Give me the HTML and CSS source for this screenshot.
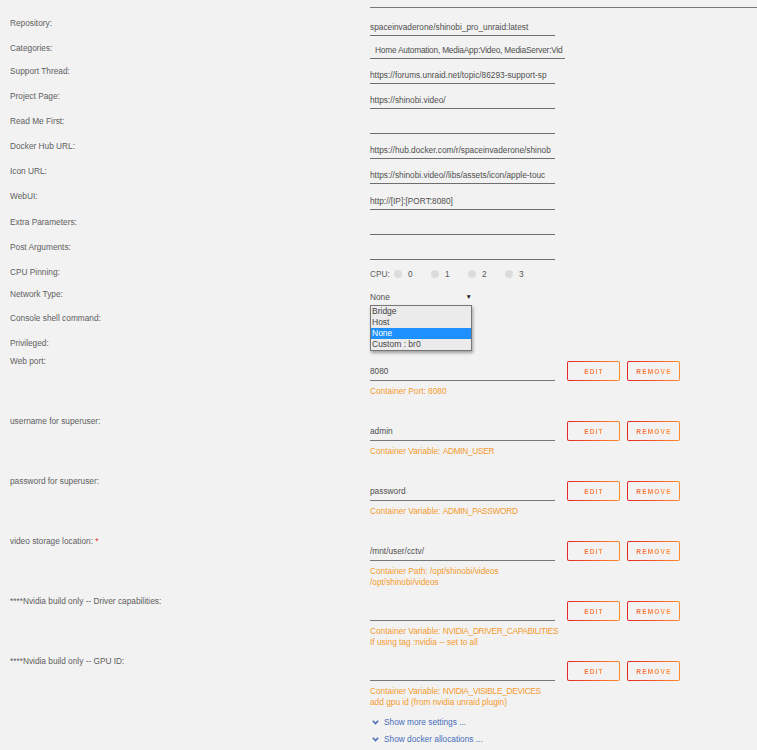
FILE: index.html
```html
<!DOCTYPE html>
<html lang="en">
<head>
  <meta charset="UTF-8" />
  <meta name="viewport" content="width=device-width, initial-scale=1.0"/>
  <title>Update Container</title>
  <link rel="stylesheet" href="styles.css">
</head>
<body>
  <div class="form">
    <div class="topline"></div>

    <div class="row">
      <div class="label">Repository:</div>
      <div class="field"><div class="input">spaceinvaderone/shinobi_pro_unraid:latest</div></div>
    </div>
    <div class="row short">
      <div class="label">Categories:</div>
      <div class="field"><div class="input wide">Home Automation, MediaApp:Video, MediaServer:Vid</div></div>
    </div>
    <div class="row">
      <div class="label">Support Thread:</div>
      <div class="field"><div class="input">https://forums.unraid.net/topic/86293-support-sp</div></div>
    </div>
    <div class="row">
      <div class="label">Project Page:</div>
      <div class="field"><div class="input">https://shinobi.video/</div></div>
    </div>
    <div class="row">
      <div class="label">Read Me First:</div>
      <div class="field"><div class="input"></div></div>
    </div>
    <div class="row">
      <div class="label">Docker Hub URL:</div>
      <div class="field"><div class="input">https://hub.docker.com/r/spaceinvaderone/shinob</div></div>
    </div>
    <div class="row">
      <div class="label">Icon URL:</div>
      <div class="field"><div class="input">https://shinobi.video//libs/assets/icon/apple-touc</div></div>
    </div>
    <div class="row tall">
      <div class="label">WebUI:</div>
      <div class="field"><div class="input">http://[IP]:[PORT:8080]</div></div>
    </div>
    <div class="row">
      <div class="label">Extra Parameters:</div>
      <div class="field"><div class="input"></div></div>
    </div>
    <div class="row">
      <div class="label">Post Arguments:</div>
      <div class="field"><div class="input"></div></div>
    </div>
    <div class="row cpu-row">
      <div class="label">CPU Pinning:</div>
      <div class="cpu">
        <span class="cpu-label">CPU:</span>
        <span class="cpu-opt"><i class="dot"></i>0</span>
        <span class="cpu-opt"><i class="dot"></i>1</span>
        <span class="cpu-opt"><i class="dot"></i>2</span>
        <span class="cpu-opt"><i class="dot"></i>3</span>
      </div>
    </div>
    <div class="row net-row">
      <div class="label">Network Type:</div>
      <div class="field-top">
        <div class="select">
          <span>None</span>
          <span class="arrow">&#9660;</span>
          <div class="options">
            <div class="option">Bridge</div>
            <div class="option">Host</div>
            <div class="option selected">None</div>
            <div class="option">Custom : br0</div>
          </div>
        </div>
      </div>
    </div>
    <div class="row">
      <div class="label">Console shell command:</div>
      <div></div>
    </div>
    <div class="row priv-row">
      <div class="label">Privileged:</div>
      <div></div>
    </div>

    <div class="entry">
      <div class="label">Web port:</div>
      <div>
        <div class="entry-row">
          <div class="input">8080</div>
          <button class="btn"><span>Edit</span></button>
          <button class="btn"><span>Remove</span></button>
        </div>
        <div class="desc">Container Port: 8080</div>
      </div>
    </div>
    <div class="entry">
      <div class="label">username for superuser:</div>
      <div>
        <div class="entry-row">
          <div class="input">admin</div>
          <button class="btn"><span>Edit</span></button>
          <button class="btn"><span>Remove</span></button>
        </div>
        <div class="desc">Container Variable: <span class="caps">ADMIN_USER</span></div>
      </div>
    </div>
    <div class="entry">
      <div class="label">password for superuser:</div>
      <div>
        <div class="entry-row">
          <div class="input">password</div>
          <button class="btn"><span>Edit</span></button>
          <button class="btn"><span>Remove</span></button>
        </div>
        <div class="desc">Container Variable: <span class="caps">ADMIN_PASSWORD</span></div>
      </div>
    </div>
    <div class="entry">
      <div class="label">video storage location: <span class="req">*</span></div>
      <div>
        <div class="entry-row">
          <div class="input">/mnt/user/cctv/</div>
          <button class="btn"><span>Edit</span></button>
          <button class="btn"><span>Remove</span></button>
        </div>
        <div class="desc">Container Path: /opt/shinobi/videos<br>/opt/shinobi/videos</div>
      </div>
    </div>
    <div class="entry">
      <div class="label">****Nvidia build only -- Driver capabilities:</div>
      <div>
        <div class="entry-row">
          <div class="input"></div>
          <button class="btn"><span>Edit</span></button>
          <button class="btn"><span>Remove</span></button>
        </div>
        <div class="desc">Container Variable: <span class="caps">NVIDIA_DRIVER_CAPABILITIES</span><br>If using tag :nvidia -- set to all</div>
      </div>
    </div>
    <div class="entry">
      <div class="label">****Nvidia build only -- GPU ID:</div>
      <div>
        <div class="entry-row">
          <div class="input"></div>
          <button class="btn"><span>Edit</span></button>
          <button class="btn"><span>Remove</span></button>
        </div>
        <div class="desc">Container Variable: <span class="caps">NVIDIA_VISIBLE_DEVICES</span><br>add gpu id (from nvidia unraid plugin)</div>
      </div>
    </div>

    <div class="links">
      <a class="more">
        <svg width="7" height="5" viewBox="0 0 7 5"><path d="M0.8 0.8 L3.5 3.6 L6.2 0.8" fill="none" stroke="#486dba" stroke-width="1.6"/></svg>
        Show more settings ...
      </a>
      <a class="more">
        <svg width="7" height="5" viewBox="0 0 7 5"><path d="M0.8 0.8 L3.5 3.6 L6.2 0.8" fill="none" stroke="#486dba" stroke-width="1.6"/></svg>
        Show docker allocations ...
      </a>
    </div>
  </div>
</body>
</html>
```

FILE: styles.css
```css
body {
  margin: 0;
  padding: 0;
  background-color: #f2f2f2;
  font-family: 'Liberation Sans', Arial, sans-serif;
  font-size: 8.3px;
  color: #606060;
}

.form {
  padding-left: 10px;
}

.topline {
  margin-left: 360px;
  height: 7px;
  border-bottom: 1px solid #7a7a7a;
  margin-bottom: 3px;
}

.row {
  display: grid;
  grid-template-columns: 360px 1fr;
  height: 25px;
}

.row.short { height: 23px; }
.row.tall { height: 26px; }
.row.cpu-row { height: 22px; }
.row.net-row { height: 24px; }
.row.priv-row { height: 18px; }

.label {
  padding-top: 6px;
  line-height: 12px;
  white-space: nowrap;
}

.req {
  color: #e22828;
}

.field {
  display: flex;
  align-items: flex-end;
}

.input {
  width: 185px;
  height: 16px;
  line-height: 16px;
  border-bottom: 1px solid #6e6e6e;
  color: #4f4f4f;
  white-space: nowrap;
  overflow: hidden;
}

.input.wide {
  width: 190px;
  padding-left: 5px;
  letter-spacing: -0.2px;
}

.cpu {
  display: flex;
  align-items: center;
  padding-top: 8px;
  line-height: 12px;
  height: 12px;
}

.cpu-label {
  width: 24px;
}

.cpu-opt {
  display: flex;
  align-items: center;
  width: 37px;
  color: #555;
}

.dot {
  display: block;
  width: 8px;
  height: 8px;
  border-radius: 50%;
  background-color: #dcdcdc;
  margin-right: 6px;
}

.field-top {
  padding-top: 9px;
}

.select {
  position: relative;
  width: 104px;
  height: 12px;
  line-height: 12px;
  display: flex;
  justify-content: space-between;
  color: #4f4f4f;
}

.arrow {
  font-size: 6.5px;
  color: #222;
  padding-right: 2px;
}

.options {
  position: absolute;
  top: 14px;
  left: 0;
  width: 100px;
  border: 1px solid #767676;
  background-color: #ebebeb;
  box-shadow: 1px 2px 3px rgba(0, 0, 0, 0.35);
  z-index: 10;
}

.option {
  height: 11px;
  line-height: 11px;
  padding-left: 1px;
  font-size: 8.5px;
  color: #444;
}

.option.selected {
  background-color: #1e90ff;
  color: white;
}

.entry {
  display: grid;
  grid-template-columns: 360px 1fr;
  height: 60px;
}

.entry-row {
  display: flex;
  align-items: flex-end;
  margin-top: 12px;
  height: 20px;
}

.entry .input {
  height: 17px;
  line-height: 17px;
  border-bottom-color: #777;
}

.btn {
  box-sizing: border-box;
  width: 53px;
  height: 20px;
  margin: 0 0 0 12px;
  padding: 0 0 0 1px;
  border: 1px solid transparent;
  border-radius: 2px;
  background: linear-gradient(#f2f2f2, #f2f2f2) padding-box,
              linear-gradient(90deg, #e22828, #ff8c2f) border-box;
  font-family: 'Liberation Sans', Arial, sans-serif;
  font-size: 6.5px;
  font-weight: bold;
  letter-spacing: 1.2px;
  text-transform: uppercase;
  cursor: pointer;
}

.btn + .btn {
  margin-left: 7px;
}

.btn span {
  background: linear-gradient(90deg, #f26d3a, #ff9440);
  -webkit-background-clip: text;
  background-clip: text;
  color: transparent;
}

.desc {
  margin-top: 5px;
  line-height: 11px;
  color: #f39a2e;
}

.caps {
  letter-spacing: -0.3px;
}

.links {
  margin-left: 362px;
  padding-top: 7px;
}

.more {
  display: flex;
  align-items: center;
  height: 12px;
  line-height: 12px;
  margin-bottom: 5px;
  color: #486dba;
  cursor: pointer;
}

.more svg {
  margin-right: 5px;
}
```
